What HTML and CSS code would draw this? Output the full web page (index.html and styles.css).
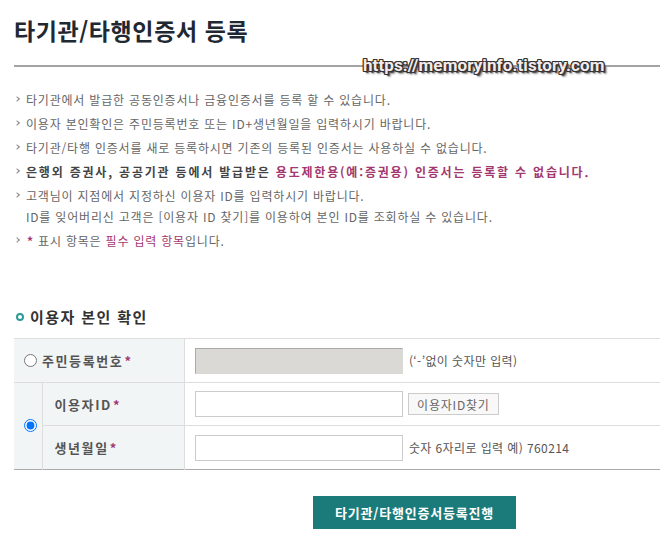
FILE: index.html
```html
<!DOCTYPE html>
<html lang="ko">

<head>
    <meta charset="UTF-8">
    <title>타기관/타행인증서 등록</title>
    <link rel="stylesheet" href="styles.css">
</head>

<body>
    <div class="page">
        <header class="page-head">
            <h1 class="page-title">타기관/타행인증서 등록</h1>
            <span class="watermark">https://memoryinfo.tistory.com</span>
        </header>

        <ul class="notice">
            <li>타기관에서 발급한 공동인증서나 금융인증서를 등록 할 수 있습니다.</li>
            <li>이용자 본인확인은 주민등록번호 또는 ID+생년월일을 입력하시기 바랍니다.</li>
            <li>타기관/타행 인증서를 새로 등록하시면 기존의 등록된 인증서는 사용하실 수 없습니다.</li>
            <li class="strong">은행외 증권사, 공공기관 등에서 발급받은 <em>용도제한용(예:증권용) 인증서는 등록할 수 없습니다.</em></li>
            <li>고객님이 지점에서 지정하신 이용자 ID를 입력하시기 바랍니다.<br>ID를 잊어버리신 고객은 [이용자 ID 찾기]를 이용하여 본인 ID를 조회하실 수 있습니다.</li>
            <li><span class="req">*</span> 표시 항목은 <span class="pink">필수 입력 항목</span>입니다.</li>
        </ul>

        <h2 class="section-title">이용자 본인 확인</h2>

        <table class="auth-table">
            <colgroup>
                <col class="col-radio">
                <col class="col-label">
                <col>
            </colgroup>
            <tr class="row-tall">
                <th colspan="2" class="th-radio">
                    <label><input type="radio" name="authType"><span>주민등록번호<span class="req">*</span></span></label>
                </th>
                <td>
                    <input type="text" class="field field-disabled" disabled>
                    <span class="hint">(‘-’없이 숫자만 입력)</span>
                </td>
            </tr>
            <tr>
                <th rowspan="2" class="radio-cell"><input type="radio" name="authType" checked></th>
                <th class="th-sub">이용자ID<span class="req">*</span></th>
                <td>
                    <input type="text" class="field">
                    <button type="button" class="btn-find">이용자ID찾기</button>
                </td>
            </tr>
            <tr class="row-tall">
                <th class="th-sub">생년월일<span class="req">*</span></th>
                <td>
                    <input type="text" class="field">
                    <span class="hint">숫자 6자리로 입력 예) 760214</span>
                </td>
            </tr>
        </table>

        <div class="actions">
            <button type="button" class="btn-submit">타기관/타행인증서등록진행</button>
        </div>
    </div>
</body>

</html>
```

FILE: styles.css
```css
body {
    margin: 0;
    padding: 0;
    font-family: "Noto Sans CJK KR", "Noto Sans", sans-serif;
    color: #666;
    background: #fff;
}

.page {
    padding-left: 14px;
}

.page-head {
    position: relative;
    padding: 15px 0 20px;
    border-bottom: 2px solid #a3a3a3;
}

.page-title {
    margin: 0;
    font-size: 23px;
    line-height: 30px;
    font-weight: bold;
    letter-spacing: 0.6px;
    color: #222831;
}

.watermark {
    position: absolute;
    left: 349px;
    bottom: -10px;
    font-family: Roboto, "Liberation Sans", sans-serif;
    font-size: 17px;
    font-weight: bold;
    line-height: 20px;
    color: #f4eaea;
    letter-spacing: 0.1px;
    text-shadow:
        -1px -1px 0 #333, 1px -1px 0 #333, -1px 1px 0 #333, 1px 1px 0 #333,
        0 -1px 0 #333, 0 1px 0 #333, -1px 0 0 #333, 1px 0 0 #333,
        2px 2px 1px #444, 3px 3px 2px #999;
}

.notice {
    list-style: none;
    margin: 22px 0 0;
    padding: 0;
    font-size: 12px;
    letter-spacing: 0.8px;
}

.notice li {
    position: relative;
    padding-left: 12px;
    line-height: 21px;
    margin-bottom: 3px;
}

.notice li::before {
    content: "";
    position: absolute;
    left: 1px;
    top: 8px;
    width: 3px;
    height: 3px;
    border-top: 1px solid #888;
    border-right: 1px solid #888;
    transform: rotate(45deg);
}

.notice li.strong {
    font-weight: bold;
    letter-spacing: 1.8px;
    color: #444;
}

.notice em {
    font-style: normal;
    color: #a3376f;
}

.pink {
    color: #a3376f;
}

.req {
    color: #a3376f;
    font-weight: bold;
    margin-left: 1px;
}

.section-title {
    display: flex;
    align-items: center;
    gap: 6px;
    margin: 56px 0 11px;
    font-size: 15px;
    line-height: 20px;
    font-weight: bold;
    letter-spacing: 1.4px;
    color: #333;
}

.section-title::before {
    content: "";
    width: 4px;
    height: 4px;
    border: 2px solid #2c9a9a;
    border-radius: 50%;
    margin-left: 2px;
}

.auth-table {
    width: 100%;
    table-layout: fixed;
    border-collapse: collapse;
    border-top: 1px solid #aaa;
    border-bottom: 1px solid #aaa;
    font-size: 12px;
}

.col-radio {
    width: 28px;
}

.col-label {
    width: 142px;
}

.auth-table tr {
    height: 43px;
}

.auth-table tr.row-tall {
    height: 44px;
}

.auth-table th,
.auth-table td {
    border-top: 1px solid #ddd;
    padding: 0;
    text-align: left;
    white-space: nowrap;
}

.auth-table th {
    background-color: #f2f5f6;
    border-right: 1px solid #ddd;
    font-size: 13px;
    font-weight: bold;
    letter-spacing: 1.6px;
    color: #555;
}

.th-radio {
    padding-left: 10px !important;
}

.th-radio label {
    display: flex;
    align-items: center;
    gap: 5px;
}

.auth-table input[type="radio"] {
    width: 13px;
    height: 13px;
    margin: 0;
}

.radio-cell {
    padding-left: 10px !important;
}

.th-sub {
    padding-left: 12px !important;
}

.auth-table td {
    padding-left: 10px;
}

.field {
    box-sizing: border-box;
    width: 208px;
    height: 26px;
    margin: 0;
    border: 1px solid #ccc;
    background: #fff;
    vertical-align: middle;
}

.field-disabled {
    background: #dad9d6;
    border-color: #aaa #dad9d6 #dad9d6 #aaa;
}

.hint {
    margin-left: 3px;
    vertical-align: middle;
    letter-spacing: 0.4px;
    color: #555;
}

.btn-find {
    margin-left: 2px;
    height: 22px;
    width: 91px;
    padding: 0;
    border: 1px solid #ccc;
    background: #f8f8f8;
    font-family: inherit;
    font-size: 12px;
    letter-spacing: 0.8px;
    color: #666;
    vertical-align: middle;
}

.actions {
    padding: 26px 0 0 299px;
}

.btn-submit {
    width: 203px;
    height: 33px;
    border: 0;
    background-color: #1b7b7b;
    color: #fff;
    font-family: inherit;
    font-size: 13px;
    font-weight: bold;
    letter-spacing: 0.8px;
}
```
